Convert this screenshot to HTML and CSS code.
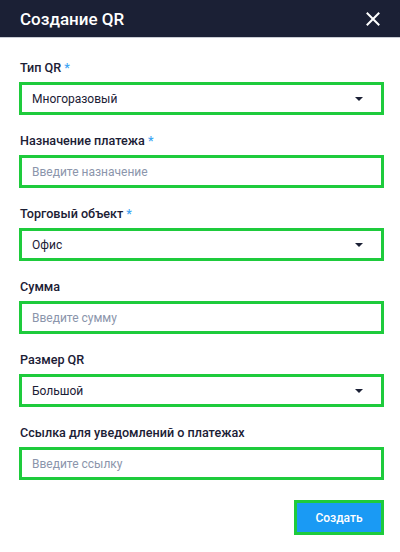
FILE: index.html
```html
<!DOCTYPE html>
<html lang="ru">
<head>
<meta charset="utf-8">
<link rel="stylesheet" href="styles.css">
</head>
<body>
<div class="modal">
  <header class="head">
    <h1 class="title">Создание QR</h1>
    <svg class="close" width="14" height="14" viewBox="0 0 14 14"><path d="M1.5 1.5L12.5 12.5M12.5 1.5L1.5 12.5" stroke="#fff" stroke-width="2" stroke-linecap="square"/></svg>
  </header>
  <form class="form">
    <div class="field">
      <div class="label">Тип QR <span class="req">*</span></div>
      <div class="box select"><span class="val">Многоразовый</span><span class="arrow"></span></div>
    </div>
    <div class="field">
      <div class="label">Назначение платежа <span class="req">*</span></div>
      <div class="box"><span class="ph">Введите назначение</span></div>
    </div>
    <div class="field">
      <div class="label">Торговый объект <span class="req">*</span></div>
      <div class="box select"><span class="val">Офис</span><span class="arrow"></span></div>
    </div>
    <div class="field">
      <div class="label">Сумма</div>
      <div class="box"><span class="ph">Введите сумму</span></div>
    </div>
    <div class="field">
      <div class="label">Размер QR</div>
      <div class="box select"><span class="val">Большой</span><span class="arrow"></span></div>
    </div>
    <div class="field">
      <div class="label">Ссылка для уведомлений о платежах</div>
      <div class="box"><span class="ph">Введите ссылку</span></div>
    </div>
    <div class="actions">
      <button type="button" class="btn">Создать</button>
    </div>
  </form>
</div>
</body>
</html>
```
FILE: styles.css
```css
* { box-sizing: border-box; }
html, body { margin: 0; padding: 0; background: #fff; }
body { font-family: Roboto, "Noto Sans", sans-serif; color: #1b2035; width: 400px; height: 552px; overflow: hidden; }
.head {
  height: 38px;
  background: #1b2035;
  border-bottom: 1px solid #c9ccd4;
  display: flex;
  align-items: center;
  justify-content: space-between;
  padding: 0 20px 0 20px;
}
.title { margin: 0; font-size: 17px; font-weight: 500; color: #fff; }
.close { display: block; }
.form { padding: 22px 16px 0 19px; display: flex; flex-direction: column; gap: 18px; }
.field { display: flex; flex-direction: column; gap: 7px; }
.label { font-size: 12.6px; font-weight: 500; line-height: 15px; padding-left: 1px; color: #1b2035; }
.req { color: #3da5f4; }
.box {
  height: 33px;
  border: 3px solid #1ecb3c;
  display: flex;
  align-items: center;
  justify-content: space-between;
  padding: 0 18px 0 10px;
  font-size: 12px;
}
.val { color: #1b2035; }
.ph { color: #8b95ab; }
.arrow {
  width: 0; height: 0;
  border-left: 4px solid transparent;
  border-right: 4px solid transparent;
  border-top: 4px solid #1b2035;
}
.actions { display: flex; justify-content: flex-end; margin-top: 2px; }
.btn {
  width: 90px; height: 35px;
  background: #1a9af4;
  border: 3px solid #1ecb3c;
  color: #fff;
  font-family: Roboto, "Noto Sans", sans-serif;
  font-size: 12px;
  font-weight: 500;
  padding: 0;
}
```
